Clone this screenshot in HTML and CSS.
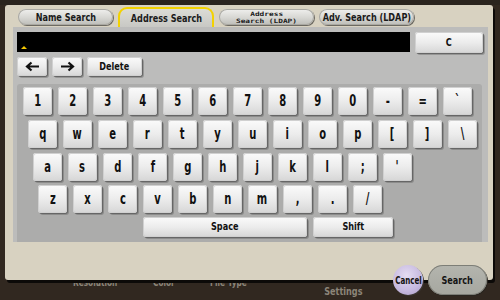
FILE: index.html
```html
<!DOCTYPE html>
<html>
<head>
<meta charset="utf-8">
<link rel="stylesheet" href="styles.css">
</head>
<body>
<div class="screen">
  <div class="panel">
    <div class="tabs">
      <div class="tab"><span class="t">Name Search</span></div>
      <div class="tab active"><span class="t">Address Search</span></div>
      <div class="tab small"><span class="m">Address</span><span class="m">Search (LDAP)</span></div>
      <div class="tab"><span class="t">Adv. Search (LDAP)</span></div>
    </div>
    <div class="body">
      <div class="input-row">
        <div class="input"><span class="caret"></span></div>
        <div class="btn clear"><span class="t">C</span></div>
      </div>
      <div class="edit-row">
        <div class="btn arrow"><svg width="15" height="11" viewBox="0 0 15 11"><path d="M14 5.5H2.5M6.5 1.5L2 5.5L6.5 9.5" fill="none" stroke="#111" stroke-width="2.2"/></svg></div>
        <div class="btn arrow"><svg width="15" height="11" viewBox="0 0 15 11"><path d="M1 5.5H12.5M8.5 1.5L13 5.5L8.5 9.5" fill="none" stroke="#111" stroke-width="2.2"/></svg></div>
        <div class="btn del"><span class="t">Delete</span></div>
      </div>
      <div class="keyboard">
        <div class="row r1">
          <div class="key"><span class="k">1</span></div><div class="key"><span class="k">2</span></div><div class="key"><span class="k">3</span></div><div class="key"><span class="k">4</span></div><div class="key"><span class="k">5</span></div><div class="key"><span class="k">6</span></div><div class="key"><span class="k">7</span></div><div class="key"><span class="k">8</span></div><div class="key"><span class="k">9</span></div><div class="key"><span class="k">0</span></div><div class="key"><span class="k">-</span></div><div class="key"><span class="k">=</span></div><div class="key"><span class="k">`</span></div>
        </div>
        <div class="row r2">
          <div class="key"><span class="k">q</span></div><div class="key"><span class="k">w</span></div><div class="key"><span class="k">e</span></div><div class="key"><span class="k">r</span></div><div class="key"><span class="k">t</span></div><div class="key"><span class="k">y</span></div><div class="key"><span class="k">u</span></div><div class="key"><span class="k">i</span></div><div class="key"><span class="k">o</span></div><div class="key"><span class="k">p</span></div><div class="key"><span class="k">[</span></div><div class="key"><span class="k">]</span></div><div class="key"><span class="k">\</span></div>
        </div>
        <div class="row r3">
          <div class="key"><span class="k">a</span></div><div class="key"><span class="k">s</span></div><div class="key"><span class="k">d</span></div><div class="key"><span class="k">f</span></div><div class="key"><span class="k">g</span></div><div class="key"><span class="k">h</span></div><div class="key"><span class="k">j</span></div><div class="key"><span class="k">k</span></div><div class="key"><span class="k">l</span></div><div class="key"><span class="k">;</span></div><div class="key"><span class="k">'</span></div>
        </div>
        <div class="row r4">
          <div class="key"><span class="k">z</span></div><div class="key"><span class="k">x</span></div><div class="key"><span class="k">c</span></div><div class="key"><span class="k">v</span></div><div class="key"><span class="k">b</span></div><div class="key"><span class="k">n</span></div><div class="key"><span class="k">m</span></div><div class="key"><span class="k">,</span></div><div class="key"><span class="k">.</span></div><div class="key"><span class="k">/</span></div>
        </div>
        <div class="row r5">
          <div class="key space"><span class="t">Space</span></div><div class="key shift"><span class="t">Shift</span></div>
        </div>
      </div>
    </div>
  </div>
  <div class="footer">
    <span class="f1 t">Resolution</span>
    <span class="f2 t">Color</span>
    <span class="f3 t">File Type</span>
    <span class="f4"><span class="t">E-mail</span><span class="t">Settings</span></span>
  </div>
  <div class="actions">
    <div class="cancel"><span class="t">Cancel</span></div>
    <div class="search"><span class="t">Search</span></div>
  </div>
</div>
</body>
</html>
```
FILE: styles.css
```css
html, body {
  margin: 0;
  padding: 0;
}
body {
  width: 500px;
  height: 300px;
  overflow: hidden;
  background: #312820;
  font-family: "DejaVu Sans Condensed", "DejaVu Sans", sans-serif;
  font-weight: bold;
  color: #111;
}
.t {
  display: inline-block;
  transform: scaleX(0.82);
  white-space: nowrap;
}
.k {
  display: inline-block;
  transform: scaleX(0.74);
}
.screen {
  position: relative;
  width: 500px;
  height: 300px;
  padding-top: 5px;
  box-sizing: border-box;
  background: linear-gradient(#2a241e 0 5px, #312820 5px);
}
.panel {
  position: relative;
  z-index: 2;
  margin-left: 5px;
  width: 488px;
  height: 275px;
  box-sizing: border-box;
  padding: 2px 0 0 8px;
  background: #d8d2c1;
  border-radius: 3px;
  box-shadow: 2px 3px 0 #0c0a08;
}
.tabs {
  display: flex;
  gap: 5px;
  padding-left: 5px;
  height: 20px;
  align-items: flex-end;
}
.tab {
  width: 95px;
  height: 16px;
  margin-bottom: 2px;
  box-sizing: border-box;
  border-radius: 8px;
  background: linear-gradient(#f0f0ee, #d6d6d2 55%, #bdbdb8);
  box-shadow: 1px 1px 0 #6d6a62, inset 0 0 0 1px #a9a8a2;
  font-size: 11px;
  display: flex;
  align-items: center;
  justify-content: center;
  color: #1a1a1a;
}
.tab.active {
  width: 96px;
  height: 20px;
  margin-bottom: 0;
  border: 2px solid #f3d200;
  border-bottom: none;
  border-radius: 9px 9px 0 0;
  background: linear-gradient(#dcdcd6, #c8c8c4);
  box-shadow: none;
  padding-top: 1px;
}
.tab.small {
  flex-direction: column;
  font-family: "DejaVu Sans Mono", monospace;
  font-size: 6px;
  line-height: 7px;
}
.tab.small .m {
  display: block;
  transform: scaleX(1.3);
  white-space: nowrap;
}
.body {
  width: 475px;
  height: 215px;
  background: #bcbcbb;
  box-sizing: border-box;
  padding: 5px 0 0 4px;
  display: flex;
  flex-direction: column;
}
.input-row {
  display: flex;
  gap: 5px;
  height: 21px;
}
.input {
  position: relative;
  width: 393px;
  height: 20px;
  background: #000;
}
.caret {
  position: absolute;
  left: 4px;
  bottom: 3px;
  width: 0;
  height: 0;
  border-left: 3px solid transparent;
  border-right: 3px solid transparent;
  border-bottom: 3px solid #f5c800;
}
.btn, .key {
  display: flex;
  align-items: center;
  justify-content: center;
  box-sizing: border-box;
  border-radius: 3px;
  background: linear-gradient(#fbfbfb, #ececec 50%, #d6d6d6);
  box-shadow: 1px 1px 0 #666, 2px 2px 0 rgba(80,80,80,0.35), inset 0 0 0 1px #d0d0d0;
  color: #111;
}
.btn.clear {
  width: 68px;
  height: 21px;
  font-size: 11px;
}
.edit-row {
  display: flex;
  gap: 5px;
  margin-top: 4px;
  height: 19px;
}
.btn.arrow {
  width: 30px;
  height: 19px;
}
.btn.del {
  width: 55px;
  height: 19px;
  font-size: 11px;
}
.keyboard {
  margin-top: 8px;
  width: 465px;
  flex: 1;
  background: #acacab;
  border-radius: 3px 3px 0 0;
  padding-top: 3px;
  box-sizing: border-box;
  display: flex;
  flex-direction: column;
  gap: 5px;
}
.row {
  display: flex;
  gap: 6px;
  height: 28px;
}
.row.r1 { padding-left: 6px; }
.row.r2 { padding-left: 11px; }
.row.r3 { padding-left: 16px; }
.row.r4 { padding-left: 21px; margin-top: -1px; }
.row.r5 { padding-left: 126px; height: 20px; margin-top: -1px; }
.key {
  width: 29px;
  height: 28px;
  font-size: 15px;
  padding-bottom: 1px;
}
.key.space {
  width: 164px;
  height: 20px;
  font-size: 11px;
}
.key.shift {
  width: 80px;
  height: 20px;
  font-size: 11px;
}
.footer {
  position: relative;
  z-index: 1;
  display: flex;
  align-items: flex-start;
  margin-top: -3px;
  height: 20px;
  color: #8c8579;
  font-size: 10px;
  line-height: 11px;
}
.footer .t { transform-origin: left center; }
.footer .f1 { margin-left: 73px; }
.footer .f2 { margin-left: 26px; }
.footer .f3 { margin-left: 30px; }
.footer .f4 {
  margin-left: 66px;
  display: flex;
  flex-direction: column;
  align-items: center;
  line-height: 13px;
  margin-top: -5px;
  font-size: 11px;
}
.footer .f4 .t { transform-origin: center; }
.actions {
  position: absolute;
  z-index: 3;
  left: 393px;
  top: 265px;
  display: flex;
  gap: 5px;
}
.cancel {
  width: 30px;
  height: 30px;
  border-radius: 50%;
  background: radial-gradient(circle at 45% 35%, #e4dcf2, #c6b9df 60%, #a89bc4);
  display: flex;
  align-items: center;
  justify-content: center;
  font-size: 11px;
  color: #141414;
  box-shadow: 1px 1px 0 #3a3530;
}
.cancel .t { transform: scaleX(0.72); }
.search {
  width: 59px;
  height: 30px;
  border-radius: 15px;
  background: linear-gradient(#b4b5ae, #a6a79f);
  box-shadow: inset 0 0 0 1px #7d7e77, 1px 1px 0 #2a2620;
  display: flex;
  align-items: center;
  justify-content: center;
  font-size: 11px;
  color: #141414;
}
```
